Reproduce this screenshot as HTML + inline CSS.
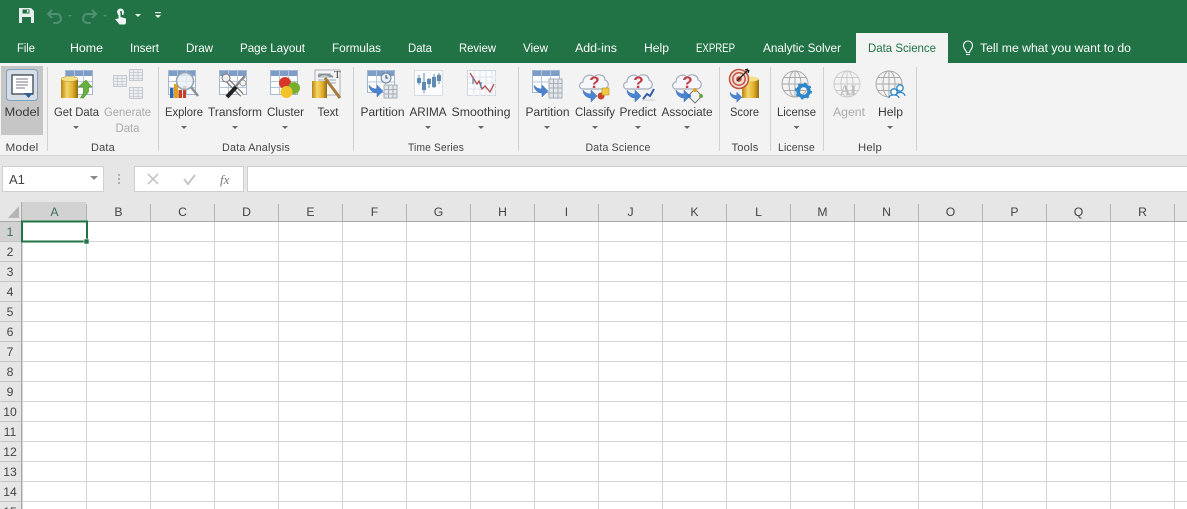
<!DOCTYPE html>
<html><head><meta charset="utf-8"><style>
html,body{margin:0;padding:0;width:1187px;height:509px;overflow:hidden;background:#fff}
svg{display:block}
text{font-family:"Liberation Sans",sans-serif}
.tab{font-size:12.4px;fill:#fff;text-anchor:middle}
.l{font-size:12.4px;fill:#3a3a3a;text-anchor:middle}
.g{font-size:11px;fill:#444;text-anchor:middle;letter-spacing:.2px}
.d{fill:#aaa}
.h{font-size:12.2px;fill:#444;text-anchor:middle}
.sep{fill:#d0d0d0}
</style></head><body>
<svg width="1187" height="509" viewBox="0 0 1187 509" xmlns="http://www.w3.org/2000/svg">
<defs>
<linearGradient id="gold" x1="0" x2="1" y1="0" y2="0"><stop offset="0" stop-color="#b8860f"/><stop offset=".35" stop-color="#f5d76a"/><stop offset=".7" stop-color="#e0ad2a"/><stop offset="1" stop-color="#8f6a10"/></linearGradient>
<pattern id="cells" x="23" y="222" width="64" height="20" patternUnits="userSpaceOnUse"><rect x="63" width="1" height="20" fill="#d4d4d4"/><rect y="19" width="64" height="1" fill="#d4d4d4"/></pattern>
<g id="tbl"><rect x=".5" y=".5" width="27" height="24" fill="#fff" stroke="#a3b7d0"/><rect x="1" y="1" width="26" height="5" fill="#7d9dc6"/><path d="M9.500 1v24M18.500 1v24M1 11.500h26M1 17.500h26" stroke="#b4c6dc" fill="none"/></g>
<g id="mini"><rect x=".5" y=".5" width="13" height="11" fill="#e8ecf0" stroke="#a5aeb8"/><path d="M1 3.500h12M1 6.500h12M1 9.500h12M4.500 1v10M9 1v10" stroke="#a5aeb8" fill="none" stroke-width=".8"/></g>
<g id="arrow"><path d="M0 6c2 3 5 4 8 4V6l6 6-6 6v-4C4 14 0 11 0 6z" fill="#4a84d0" stroke="#3a6cb4" stroke-width=".5"/></g>
<g id="cloud"><path d="M5 20c-4 0-5-6 0-7 0-6 7-9 11-5 4-4 11-2 11 3 4 1 5 8-1 9z" fill="#f6f7fa" stroke="#a4adba" stroke-width="1.200"/><text x="16.500" y="19" font-size="17" font-weight="bold" fill="#c43a42" text-anchor="middle">?</text></g>
<g id="globe" fill="none" stroke-width="1"><circle cx="14" cy="14" r="13"/><ellipse cx="14" cy="14" rx="6" ry="13"/><path d="M1 14h26M3 7.500h22M3 20.500h22M14 1v26"/></g>
<path id="dn" d="M-3 0h6l-3 3z" fill="#666"/>
</defs>

<!-- title and tabs -->
<rect width="1187" height="63" fill="#217346"/>
<rect x="856" y="33" width="92" height="30" fill="#f3f3f3"/>
<!-- QAT -->
<path d="M19 8h12l3 3v12H19z" fill="#e8f0ec"/><rect x="22.500" y="9.500" width="7" height="4" fill="#217346"/><rect x="22" y="17" width="9" height="6" fill="#217346"/><rect x="27" y="10" width="1.500" height="2.500" fill="#e8f0ec"/>
<path d="M52 10l-4 4 4 4M48.500 14h8a4.500 4.500 0 0 1 0 9h-3" fill="none" stroke="#4f9170" stroke-width="2"/>
<path d="M68 15h4l-2 2z" fill="#4f9170"/>
<path d="M92 10l4 4-4 4M95.500 14h-8a4.500 4.500 0 0 0 0 9h3" fill="none" stroke="#4f9170" stroke-width="2"/>
<path d="M103 15h4l-2 2z" fill="#4f9170"/>
<path d="M117 12a3.500 3.500 0 0 1 7 0l-.5 3h-1.500v-3a1 1 0 0 0-2 0v3h-2z" fill="#f0f4f2"/><path d="M118.500 12.500h2v4.500l5.500 1.500v4.500l-1 1.500h-5.500l-4.500-5.500 3.500-.5z" fill="#f0f4f2"/>
<path d="M135 14h6l-3 3z" fill="#e8f0ec"/>
<path d="M155 12h6v1.200h-6zM155 15h6l-3 3z" fill="#e8f0ec"/>

<g>
<text class="tab" x="26" y="52" textLength="18" lengthAdjust="spacingAndGlyphs">File</text>
<text class="tab" x="86.500" y="52" textLength="33" lengthAdjust="spacingAndGlyphs">Home</text>
<text class="tab" x="144.500" y="52" textLength="29" lengthAdjust="spacingAndGlyphs">Insert</text>
<text class="tab" x="199.500" y="52" textLength="27" lengthAdjust="spacingAndGlyphs">Draw</text>
<text class="tab" x="272.500" y="52" textLength="65" lengthAdjust="spacingAndGlyphs">Page Layout</text>
<text class="tab" x="356.500" y="52" textLength="49" lengthAdjust="spacingAndGlyphs">Formulas</text>
<text class="tab" x="420" y="52" textLength="24" lengthAdjust="spacingAndGlyphs">Data</text>
<text class="tab" x="477.500" y="52" textLength="37" lengthAdjust="spacingAndGlyphs">Review</text>
<text class="tab" x="535.500" y="52" textLength="25" lengthAdjust="spacingAndGlyphs">View</text>
<text class="tab" x="596" y="52" textLength="42" lengthAdjust="spacingAndGlyphs">Add-ins</text>
<text class="tab" x="656.500" y="52" textLength="25" lengthAdjust="spacingAndGlyphs">Help</text>
<text class="tab" x="715.500" y="52" textLength="39" lengthAdjust="spacingAndGlyphs">EXPREP</text>
<text class="tab" x="802" y="52" textLength="78" lengthAdjust="spacingAndGlyphs">Analytic Solver</text>
<text class="tab" x="902" y="52" style="fill:#217346" textLength="68" lengthAdjust="spacingAndGlyphs">Data Science</text>
<text class="tab" x="980" y="52" style="text-anchor:start" textLength="151" lengthAdjust="spacingAndGlyphs">Tell me what you want to do</text>
</g>
<path d="M966.500 52.500c0-2-3-3.500-3-7a4.500 4.500 0 0 1 9 0c0 3.500-3 5-3 7zM966 54.500h4" fill="none" stroke="#fff" stroke-width="1.100"/>

<!-- ribbon -->
<rect y="63" width="1187" height="92" fill="#f3f3f3"/>
<rect y="155" width="1187" height="1" fill="#d2d2d2"/>
<rect x="1" y="66" width="42" height="69" fill="#c6c6c6"/>
<g class="sep"><rect x="47" y="67" width="1" height="84"/><rect x="158" y="67" width="1" height="84"/><rect x="353" y="67" width="1" height="84"/><rect x="518" y="67" width="1" height="84"/><rect x="719" y="67" width="1" height="84"/><rect x="770" y="67" width="1" height="84"/><rect x="823" y="67" width="1" height="84"/><rect x="916" y="67" width="1" height="84"/></g>

<!-- Model -->
<rect x="6.500" y="69.500" width="31" height="31" rx="3" fill="#d5dde6" stroke="#7e9fbe"/>
<rect x="12" y="75" width="21" height="19" fill="#fff" stroke="#3c4650" stroke-width="1.300"/>
<path d="M16 79h12M16 82h12M16 85h12M16 88h9" stroke="#778" stroke-width="1"/>
<path d="M24 93h9l-4.500 5z" fill="#2f5f94"/>

<!-- Get Data -->
<use href="#tbl" x="65" y="70"/>
<rect x="61" y="79" width="17" height="19" fill="url(#gold)"/><ellipse cx="69.500" cy="79" rx="8.500" ry="2.500" fill="#f5e08a" stroke="#b8901f" stroke-width=".5"/>
<path d="M86 80l6 7h-3.500v5l-5 6h-3l3-5v-6H78z" fill="#66b13c" stroke="#3c7f20" stroke-width=".5"/>
<!-- Generate (disabled) -->
<g opacity=".6"><use href="#mini" x="129" y="69"/><use href="#mini" x="113" y="75"/><use href="#mini" x="129" y="87"/></g>

<!-- Explore -->
<use href="#tbl" x="168" y="70"/>
<rect x="170" y="88" width="3.500" height="10" fill="#3466b0"/><rect x="174" y="84" width="4" height="14" fill="#e0a020"/><rect x="178.500" y="90" width="3.500" height="8" fill="#c63e26"/><rect x="183" y="86" width="3" height="12" fill="#c63e26"/>
<circle cx="185" cy="81" r="8.500" fill="#e8eff8" fill-opacity=".8" stroke="#9aa5b2" stroke-width="1.600"/>
<path d="M191 87l7 9" stroke="#8a929a" stroke-width="2.600"/>

<!-- Transform -->
<use href="#tbl" x="219" y="70"/>
<path d="M227 80l15 15" stroke="#666" stroke-width="4.500"/><path d="M227 80l15 15" stroke="#f4f4f4" stroke-width="2.500"/>
<path d="M245 76l-10 11" stroke="#8a8a8a" stroke-width="2.500"/><path d="M236 87l-9 10" stroke="#222" stroke-width="4"/>
<circle cx="226" cy="78" r="4" fill="#eee" stroke="#777"/><circle cx="243" cy="83" r="3" fill="#f4f4f4" stroke="#999"/>

<!-- Cluster -->
<use href="#tbl" x="270" y="70"/>
<circle cx="285" cy="83" r="6" fill="#d8362a"/><circle cx="294" cy="88" r="6" fill="#76ae2e"/><circle cx="286.500" cy="92" r="6" fill="#f2c42a"/>

<!-- Text -->
<rect x="315" y="70" width="25" height="25" fill="#f5f5f5" stroke="#aab2bb"/><path d="M318 74h13M318 77h13M318 80h18M318 83h18" stroke="#97a8bb"/>
<text x="334" y="78" font-size="11" fill="#444" style="font-family:'Liberation Serif',serif">T</text>
<rect x="312" y="81" width="15" height="17" fill="url(#gold)"/>
<path d="M318 76c6-3 11-1 15 1" stroke="#8a8f94" stroke-width="2" fill="none"/><path d="M325 78l15 20" stroke="#a87a38" stroke-width="3"/>

<!-- Time series -->
<g transform="translate(367 70)"><rect x=".5" y=".5" width="27" height="22" fill="#fff" stroke="#a3b7d0"/><rect x="1" y="1" width="26" height="5" fill="#7d9dc6"/><path d="M9.500 1v22M18.500 1v22M1 12h26" stroke="#b4c6dc"/><use href="#arrow" x="2" y="9"/><rect x="17" y="15" width="13" height="13" fill="#e4e7ea" stroke="#a5aeb8"/><path d="M17 19.500h13M17 24h13M21.500 15v13M26 15v13" stroke="#a5aeb8"/><circle cx="19" cy="8" r="5" fill="#e6eef6" stroke="#667b95"/><path d="M19 5v3h2" stroke="#345" fill="none"/></g>
<g transform="translate(414 70)"><rect x=".5" y=".5" width="28" height="25" fill="#fbfcfe" stroke="#b8c3d0" stroke-dasharray="1 1"/><path d="M5 5v10M10 3v20M15 8v10M20 4v14M25 3v11" stroke="#5f8ab2" stroke-width="1"/><path d="M3 8h4v5H3zM8 12h4v8H8zM13 9h4v5h-4zM18 7h4v10h-4zM23 5h4v6h-4z" fill="#5f8ab2"/></g>
<g transform="translate(467 70)"><rect x=".5" y=".5" width="28" height="25" fill="#fbfcfe" stroke="#a8b4c2" stroke-dasharray="1 1"/><path d="M1 7h28M1 13h28M1 19h28M7 1v25M13 1v25M19 1v25M25 1v25" stroke="#dde4ec"/><path d="M3 3l7 11 2-3 3 8 3-3 5 6 4-8" stroke="#b04c4b" stroke-width="1.300" fill="none"/><path d="M6 8v6M14 12v6" stroke="#5f8ab2" stroke-width="1.300"/></g>

<!-- Data science -->
<g transform="translate(532 70)"><rect x=".5" y=".5" width="27" height="22" fill="#fff" stroke="#a3b7d0"/><rect x="1" y="1" width="26" height="5" fill="#7d9dc6"/><path d="M9.500 1v22M18.500 1v22M1 12h26" stroke="#b4c6dc"/><use href="#arrow" x="2" y="9"/><rect x="17" y="9" width="13" height="19" fill="#e4e7ea" stroke="#a5aeb8"/><path d="M17 13.500h13M17 18h13M17 23h13M21.500 9v19M26 9v19" stroke="#a5aeb8"/></g>
<g transform="translate(578 69)"><use href="#cloud"/><use href="#arrow" x="5" y="15"/><circle cx="23" cy="27" r="3.500" fill="#c8442b"/><rect x="24" y="19" width="7" height="7" fill="#f2c942" stroke="#b89325" stroke-width=".6"/></g>
<g transform="translate(622 69)"><use href="#cloud"/><use href="#arrow" x="5" y="15"/><path d="M21 30l4-5 3 2 4-7" stroke="#355fa8" stroke-width="2" fill="none"/><path d="M20 31h13" stroke="#ccc"/></g>
<g transform="translate(671 69)"><use href="#cloud"/><use href="#arrow" x="5" y="15"/><path d="M24 20l7 7-7 7-7-7z" fill="none" stroke="#777"/><circle cx="24" cy="21" r="2" fill="#e0a020"/><circle cx="30" cy="27" r="2" fill="#66a83c"/><circle cx="18" cy="27" r="2" fill="#3d78c9"/></g>

<!-- Score -->
<rect x="742" y="79" width="17" height="19" fill="url(#gold)"/><ellipse cx="750.500" cy="79" rx="8.500" ry="2.500" fill="#f5e08a"/>
<circle cx="739" cy="79" r="9.500" fill="#f3dfd8" stroke="#c2503c" stroke-width="1.500"/><circle cx="739" cy="79" r="6.200" fill="none" stroke="#c2503c" stroke-width="1.500"/><circle cx="739" cy="79" r="2.800" fill="#c2503c"/>
<path d="M737 81l11-11M745 70l3-1M748 73l1-3" stroke="#222" stroke-width="1.300"/>
<g transform="translate(730 87) scale(.85)"><use href="#arrow"/></g>

<!-- License -->
<use href="#globe" x="781" y="70" stroke="#aaa"/>
<circle cx="803.500" cy="91" r="5.500" fill="none" stroke="#2b87c9" stroke-width="3.500"/><circle cx="803.500" cy="91" r="7.500" fill="none" stroke="#2b87c9" stroke-width="2" stroke-dasharray="2.500 3.400"/>

<!-- Agent -->
<use href="#globe" x="833" y="70" stroke="#cbcbcb"/>
<text x="848" y="95" font-size="15" font-weight="bold" fill="#bdbdbd" text-anchor="middle" style="font-family:'Liberation Serif',serif">AI</text>

<!-- Help -->
<use href="#globe" x="875" y="70" stroke="#aaa"/>
<circle cx="900" cy="88" r="3.200" fill="#fff" stroke="#2b87c9" stroke-width="1.300"/><circle cx="894" cy="92" r="3.200" fill="#fff" stroke="#2b87c9" stroke-width="1.300"/><path d="M889 98c0-4 9-4 10 0M897 93c3-1 7-1 8 3" fill="#fff" stroke="#2b87c9" stroke-width="1.300"/>

<!-- ribbon labels -->
<text class="l" x="22" y="116" textLength="35" lengthAdjust="spacingAndGlyphs">Model</text>
<text class="l" x="76.500" y="116" textLength="45" lengthAdjust="spacingAndGlyphs">Get Data</text>
<text class="l d" x="127.500" y="116" textLength="47" lengthAdjust="spacingAndGlyphs">Generate</text>
<text class="l d" x="127.500" y="132" textLength="24" lengthAdjust="spacingAndGlyphs">Data</text>
<text class="l" x="184" y="116" textLength="38" lengthAdjust="spacingAndGlyphs">Explore</text>
<text class="l" x="235" y="116" textLength="54" lengthAdjust="spacingAndGlyphs">Transform</text>
<text class="l" x="285.500" y="116" textLength="37" lengthAdjust="spacingAndGlyphs">Cluster</text>
<text class="l" x="328" y="116" textLength="21" lengthAdjust="spacingAndGlyphs">Text</text>
<text class="l" x="382.500" y="116" textLength="44" lengthAdjust="spacingAndGlyphs">Partition</text>
<text class="l" x="428" y="116" textLength="37" lengthAdjust="spacingAndGlyphs">ARIMA</text>
<text class="l" x="481" y="116" textLength="59" lengthAdjust="spacingAndGlyphs">Smoothing</text>
<text class="l" x="547.500" y="116" textLength="44" lengthAdjust="spacingAndGlyphs">Partition</text>
<text class="l" x="595" y="116" textLength="40" lengthAdjust="spacingAndGlyphs">Classify</text>
<text class="l" x="638" y="116" textLength="37" lengthAdjust="spacingAndGlyphs">Predict</text>
<text class="l" x="687" y="116" textLength="51" lengthAdjust="spacingAndGlyphs">Associate</text>
<text class="l" x="744.500" y="116" textLength="29" lengthAdjust="spacingAndGlyphs">Score</text>
<text class="l" x="796.500" y="116" textLength="39" lengthAdjust="spacingAndGlyphs">License</text>
<text class="l d" x="849" y="116" textLength="32" lengthAdjust="spacingAndGlyphs">Agent</text>
<text class="l" x="890.500" y="116" textLength="25" lengthAdjust="spacingAndGlyphs">Help</text>
<use href="#dn" x="76" y="126"/><use href="#dn" x="184" y="126"/><use href="#dn" x="235" y="126"/><use href="#dn" x="285" y="126"/><use href="#dn" x="428" y="126"/><use href="#dn" x="481" y="126"/><use href="#dn" x="547" y="126"/><use href="#dn" x="595" y="126"/><use href="#dn" x="638" y="126"/><use href="#dn" x="687" y="126"/><use href="#dn" x="796.500" y="126"/><use href="#dn" x="890" y="126"/>
<text class="g" x="22" y="151" textLength="33" lengthAdjust="spacingAndGlyphs">Model</text>
<text class="g" x="103" y="151" textLength="24" lengthAdjust="spacingAndGlyphs">Data</text>
<text class="g" x="256" y="151" textLength="68" lengthAdjust="spacingAndGlyphs">Data Analysis</text>
<text class="g" x="436" y="151" textLength="56" lengthAdjust="spacingAndGlyphs">Time Series</text>
<text class="g" x="618" y="151" textLength="65" lengthAdjust="spacingAndGlyphs">Data Science</text>
<text class="g" x="745" y="151" textLength="27" lengthAdjust="spacingAndGlyphs">Tools</text>
<text class="g" x="796.500" y="151" textLength="37" lengthAdjust="spacingAndGlyphs">License</text>
<text class="g" x="870" y="151" textLength="24" lengthAdjust="spacingAndGlyphs">Help</text>

<!-- formula bar -->
<rect y="156" width="1187" height="46" fill="#e6e6e6"/>
<rect x="2.500" y="166.500" width="101" height="25" fill="#fff" stroke="#d0d0d0"/>
<text x="9" y="184" font-size="13" fill="#444">A1</text>
<path d="M90 176h8l-4 4z" fill="#8a8a8a"/>
<path d="M118 174h2v2h-2zM118 178h2v2h-2zM118 182h2v2h-2z" fill="#b0b0b0"/>
<rect x="134.500" y="166.500" width="109" height="25" fill="#fff" stroke="#d0d0d0"/>
<path d="M148 174l10 10M158 174l-10 10" stroke="#c6c6c6" stroke-width="1.600"/>
<path d="M184 179l4 5 7-9" fill="none" stroke="#c6c6c6" stroke-width="2"/>
<text x="220" y="184" font-size="13" font-style="italic" fill="#777" style="font-family:'Liberation Serif',serif">fx</text>
<rect x="247.500" y="166.500" width="945" height="25" fill="#fff" stroke="#d0d0d0"/>

<!-- grid -->
<rect y="202" width="1187" height="307" fill="#e6e6e6"/>
<rect x="22" y="222" width="1165" height="287" fill="#fff"/>
<rect x="22" y="222" width="1165" height="287" fill="url(#cells)"/>
<rect x="22" y="202" width="64" height="19" fill="#d2d2d2"/>
<rect x="0" y="222" width="21" height="19" fill="#d2d2d2"/>
<path d="M19 206v12H8z" fill="#b5b5b5"/>
<path fill="#b4b4b4" d="M86 204h1v17h-1zM150 204h1v17h-1zM214 204h1v17h-1zM278 204h1v17h-1zM342 204h1v17h-1zM406 204h1v17h-1zM470 204h1v17h-1zM534 204h1v17h-1zM598 204h1v17h-1zM662 204h1v17h-1zM726 204h1v17h-1zM790 204h1v17h-1zM854 204h1v17h-1zM918 204h1v17h-1zM982 204h1v17h-1zM1046 204h1v17h-1zM1110 204h1v17h-1zM1174 204h1v17h-1z"/>
<path fill="#c4c4c4" d="M0 241h21v1H0zM0 261h21v1H0zM0 281h21v1H0zM0 301h21v1H0zM0 321h21v1H0zM0 341h21v1H0zM0 361h21v1H0zM0 381h21v1H0zM0 401h21v1H0zM0 421h21v1H0zM0 441h21v1H0zM0 461h21v1H0zM0 481h21v1H0zM0 501h21v1H0z"/>
<rect y="221" width="1187" height="1" fill="#a9a9a9"/>
<rect x="21" y="202" width="1" height="307" fill="#a9a9a9"/>
<g>
<text class="h" x="54.500" y="216" style="fill:#3f6b55">A</text><text class="h" x="118.500" y="216">B</text><text class="h" x="182.500" y="216">C</text><text class="h" x="246.500" y="216">D</text><text class="h" x="310.500" y="216">E</text><text class="h" x="374.500" y="216">F</text><text class="h" x="438.500" y="216">G</text><text class="h" x="502.500" y="216">H</text><text class="h" x="566.500" y="216">I</text><text class="h" x="630.500" y="216">J</text><text class="h" x="694.500" y="216">K</text><text class="h" x="758.500" y="216">L</text><text class="h" x="822.500" y="216">M</text><text class="h" x="886.500" y="216">N</text><text class="h" x="950.500" y="216">O</text><text class="h" x="1014.500" y="216">P</text><text class="h" x="1078.500" y="216">Q</text><text class="h" x="1142.500" y="216">R</text>
<text class="h" x="10" y="236" style="fill:#3f6b55">1</text><text class="h" x="10" y="256">2</text><text class="h" x="10" y="276">3</text><text class="h" x="10" y="296">4</text><text class="h" x="10" y="316">5</text><text class="h" x="10" y="336">6</text><text class="h" x="10" y="356">7</text><text class="h" x="10" y="376">8</text><text class="h" x="10" y="396">9</text><text class="h" x="10" y="416">10</text><text class="h" x="10" y="436">11</text><text class="h" x="10" y="456">12</text><text class="h" x="10" y="476">13</text><text class="h" x="10" y="496">14</text><text class="h" x="10" y="516">15</text>
</g>
<!-- selection -->
<rect x="22" y="221" width="65" height="1" fill="#7fc29b"/>
<rect x="22" y="221.500" width="65" height="20" fill="none" stroke="#217346" stroke-width="2"/>
<rect x="84" y="239" width="5" height="5" fill="#217346" stroke="#fff" stroke-width=".6"/>
</svg>
</body></html>
